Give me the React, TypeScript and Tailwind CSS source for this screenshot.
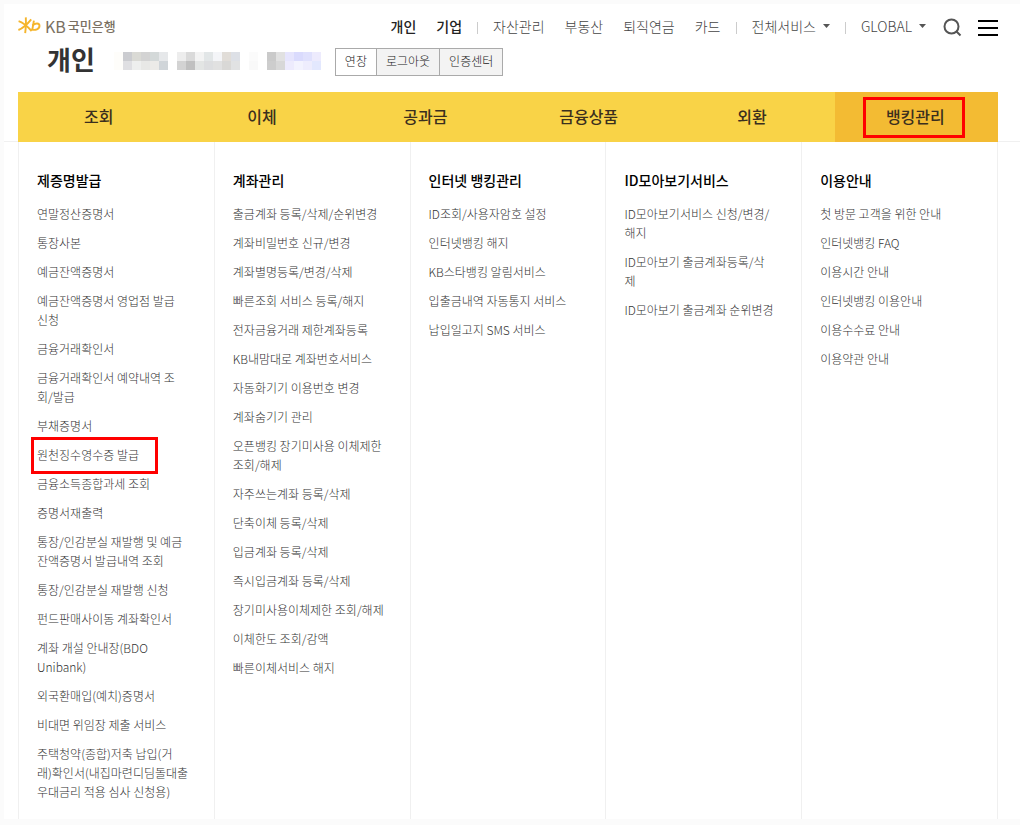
interface MenuLink {
  label: string;
  marked?: boolean;
}

interface MenuColumn {
  title: string;
  links: MenuLink[];
}

const mainNav = ['조회', '이체', '공과금', '금융상품', '외환', '뱅킹관리'];
const activeNav = '뱅킹관리';

const columns: MenuColumn[] = [
  {
    title: '제증명발급',
    links: [
      { label: '연말정산증명서' },
      { label: '통장사본' },
      { label: '예금잔액증명서' },
      { label: '예금잔액증명서 영업점 발급\n신청' },
      { label: '금융거래확인서' },
      { label: '금융거래확인서 예약내역 조\n회/발급' },
      { label: '부채증명서' },
      { label: '원천징수영수증 발급', marked: true },
      { label: '금융소득종합과세 조회' },
      { label: '증명서재출력' },
      { label: '통장/인감분실 재발행 및 예금\n잔액증명서 발급내역 조회' },
      { label: '통장/인감분실 재발행 신청' },
      { label: '펀드판매사이동 계좌확인서' },
      { label: '계좌 개설 안내장(BDO\nUnibank)' },
      { label: '외국환매입(예치)증명서' },
      { label: '비대면 위임장 제출 서비스' },
      { label: '주택청약(종합)저축 납입(거\n래)확인서(내집마련디딤돌대출\n우대금리 적용 심사 신청용)' },
    ],
  },
  {
    title: '계좌관리',
    links: [
      { label: '출금계좌 등록/삭제/순위변경' },
      { label: '계좌비밀번호 신규/변경' },
      { label: '계좌별명등록/변경/삭제' },
      { label: '빠른조회 서비스 등록/해지' },
      { label: '전자금융거래 제한계좌등록' },
      { label: 'KB내맘대로 계좌번호서비스' },
      { label: '자동화기기 이용번호 변경' },
      { label: '계좌숨기기 관리' },
      { label: '오픈뱅킹 장기미사용 이체제한\n조회/해제' },
      { label: '자주쓰는계좌 등록/삭제' },
      { label: '단축이체 등록/삭제' },
      { label: '입금계좌 등록/삭제' },
      { label: '즉시입금계좌 등록/삭제' },
      { label: '장기미사용이체제한 조회/해제' },
      { label: '이체한도 조회/감액' },
      { label: '빠른이체서비스 해지' },
    ],
  },
  {
    title: '인터넷 뱅킹관리',
    links: [
      { label: 'ID조회/사용자암호 설정' },
      { label: '인터넷뱅킹 해지' },
      { label: 'KB스타뱅킹 알림서비스' },
      { label: '입출금내역 자동통지 서비스' },
      { label: '납입일고지 SMS 서비스' },
    ],
  },
  {
    title: 'ID모아보기서비스',
    links: [
      { label: 'ID모아보기서비스 신청/변경/\n해지' },
      { label: 'ID모아보기 출금계좌등록/삭\n제' },
      { label: 'ID모아보기 출금계좌 순위변경' },
    ],
  },
  {
    title: '이용안내',
    links: [
      { label: '첫 방문 고객을 위한 안내' },
      { label: '인터넷뱅킹 FAQ' },
      { label: '이용시간 안내' },
      { label: '인터넷뱅킹 이용안내' },
      { label: '이용수수료 안내' },
      { label: '이용약관 안내' },
    ],
  },
];

// Masked customer name, one colour per 9px block
const maskRows = [
  ['#fefdfa', '#cbccd0', '#dadad5', '#d3d3d3', '#d4d9d9', '#e6e8ea', '', '#ededed', '#dadada', '#f3f3f3', '#e2e6e7', '#f4f5f8', '#e1ddd8', '#dde0e6', '', '#fbfbfb', '', '#cacaca', '#e1e1e1', '#e6e5fd', '#dadbfd', '#e0e1fd', '#edebfd'],
  ['#fefdfa', '#dfdfe2', '#eeefee', '#e8e8e6', '#ecebe8', '#d0d5d9', '', '#d3d3d3', '#c0c0c0', '#e3e5e4', '#dddee0', '#e1e1e1', '#d9d8d6', '#e1e2e3', '', '#f9f9f9', '', '#cdcdcd', '#d8d8d8', '#edebfd', '#f3f3fe', '#eeedfd', '#e3e8fe'],
];

function Logo() {
  return (
    <a href="#" className="flex items-center text-[#7a7062]">
      <svg width="23" height="17" viewBox="0 0 23 17" fill="none" stroke="#f5b52c" strokeWidth="1.9" aria-hidden="true">
        <path d="M7.8 .4C8.2 5 8.1 11 7.2 16.2" />
        <path d="M.6 4.2C4.4 5.4 9.5 9.5 13.6 14" />
        <path d="M.4 13C4.5 11.5 9.5 7 13.2 2.4" />
        <path d="M15.9 3.6C15.4 6.5 14.9 9 14.4 12.3" />
        <path d="M14.4 8.4C17.5 5.8 21.6 5.9 21.5 8.9C21.4 12 17.5 13.8 13.2 12.3" />
      </svg>
      <span className="ml-1 text-base leading-4">KB</span>
      <span className="ml-0.5 text-[13px] leading-4 font-medium">국민은행</span>
    </a>
  );
}

function Divider() {
  return <span className="mt-1 h-3 w-px bg-[#ccc]" />;
}

function Caret() {
  return (
    <svg width="7" height="4" viewBox="0 0 7 4" fill="#555" aria-hidden="true">
      <path d="M0 0H7L3.5 4Z" />
    </svg>
  );
}

function TopBar() {
  return (
    <header className="flex items-center justify-between pt-[10px] pr-[22px] pl-[14px]">
      <Logo />
      <div className="flex items-center gap-[15px] text-sm leading-5 font-light text-[#444]">
        <nav className="flex gap-5 font-medium text-[#222]">
          <a href="#">개인</a>
          <a href="#">기업</a>
        </nav>
        <Divider />
        <nav className="flex gap-5">
          <a href="#">자산관리</a>
          <a href="#">부동산</a>
          <a href="#">퇴직연금</a>
          <a href="#">카드</a>
        </nav>
        <Divider />
        <button type="button" className="flex items-center gap-[7px]">
          전체서비스
          <Caret />
        </button>
        <Divider />
        <button type="button" className="flex items-center gap-[7px]">
          GLOBAL
          <Caret />
        </button>
        <div className="mt-1 ml-[2px] flex items-center gap-4">
          <button type="button" aria-label="검색">
            <svg width="19" height="19" viewBox="0 0 19 19" fill="none" stroke="#555" strokeWidth="2">
              <circle cx="8.5" cy="8.5" r="7" />
              <path d="M13 13L17.5 17.5" />
            </svg>
          </button>
          <button type="button" aria-label="전체메뉴">
            <svg width="20" height="16" viewBox="0 0 20 16" fill="#000">
              <path d="M0 0H20V2H0ZM0 7H20V9H0ZM0 14H20V16H0Z" />
            </svg>
          </button>
        </div>
      </div>
    </header>
  );
}

function UserBar() {
  return (
    <div className="flex h-[55px] items-start pl-[43px]">
      <h1 className="mt-1 text-[26px] leading-9 font-bold text-[#333]">개인</h1>
      <svg width="207" height="18" viewBox="0 0 207 18" shapeRendering="crispEdges" className="mt-[15px] ml-[19px]" aria-hidden="true">
        {maskRows.map((row, y) =>
          row.map((color, x) => color && <rect key={`${x}-${y}`} x={x * 9} y={y * 9} width="9" height="9" fill={color} />),
        )}
      </svg>
      <div className="mt-[11px] ml-[14px] flex h-7 divide-x divide-[#aaa] border border-[#aaa] bg-[#f3f3f3] text-xs font-light text-[#222]">
        <button type="button" className="bg-white px-[9px] pb-0.5">연장</button>
        <button type="button" className="px-[9px] pb-0.5">로그아웃</button>
        <button type="button" className="px-[9px] pb-0.5">인증센터</button>
      </div>
    </div>
  );
}

function MainNav() {
  return (
    <div className="flex">
      <div className="w-[14px] border-b border-[#f0f0f0]" />
      <nav className="grid h-[50px] flex-1 grid-cols-6 bg-[#f9d347] text-base font-medium text-[#3b2f1e]">
        {mainNav.map((name) => (
          <a
            key={name}
            href="#"
            className={`relative flex items-center justify-center pr-0.5 pb-0.5 ${name === activeNav ? 'bg-[#f3bb33]' : ''}`}
          >
            {name}
            {name === activeNav && (
              <span className="absolute top-[5px] bottom-1 left-7 w-[102px] border-3 border-[#f00]" />
            )}
          </a>
        ))}
      </nav>
      <div className="w-[22px] border-b border-[#f0f0f0]" />
    </div>
  );
}

function Column({ column }: { column: MenuColumn }) {
  return (
    <section className="border-l border-[#f0f0f0] pt-7 pr-4 pb-4 pl-[18px]">
      <h2 className="text-sm leading-5 font-medium text-black">{column.title}</h2>
      <ul className="mt-[14px] space-y-[10px] text-xs leading-[19px] font-light text-[#333]">
        {column.links.map((link) => (
          <li key={link.label} className="relative">
            <a href="#" className="whitespace-pre-line">{link.label}</a>
            {link.marked && (
              <span className="pointer-events-none absolute -top-2 -bottom-[10px] -left-[6px] w-[127px] border-3 border-[#f00]" />
            )}
          </li>
        ))}
      </ul>
    </section>
  );
}

export default function App() {
  return (
    <div className="flex min-h-screen flex-col bg-[#fbfbfb] pt-1 pb-[6px] pl-1 font-['Noto_Sans_CJK_KR',sans-serif]">
      <main className="flex flex-1 flex-col bg-white">
        <TopBar />
        <UserBar />
        <MainNav />
        <div className="mr-[22px] ml-[14px] grid flex-1 grid-cols-5 border-r border-[#f0f0f0]">
          {columns.map((column) => (
            <Column key={column.title} column={column} />
          ))}
        </div>
      </main>
    </div>
  );
}
